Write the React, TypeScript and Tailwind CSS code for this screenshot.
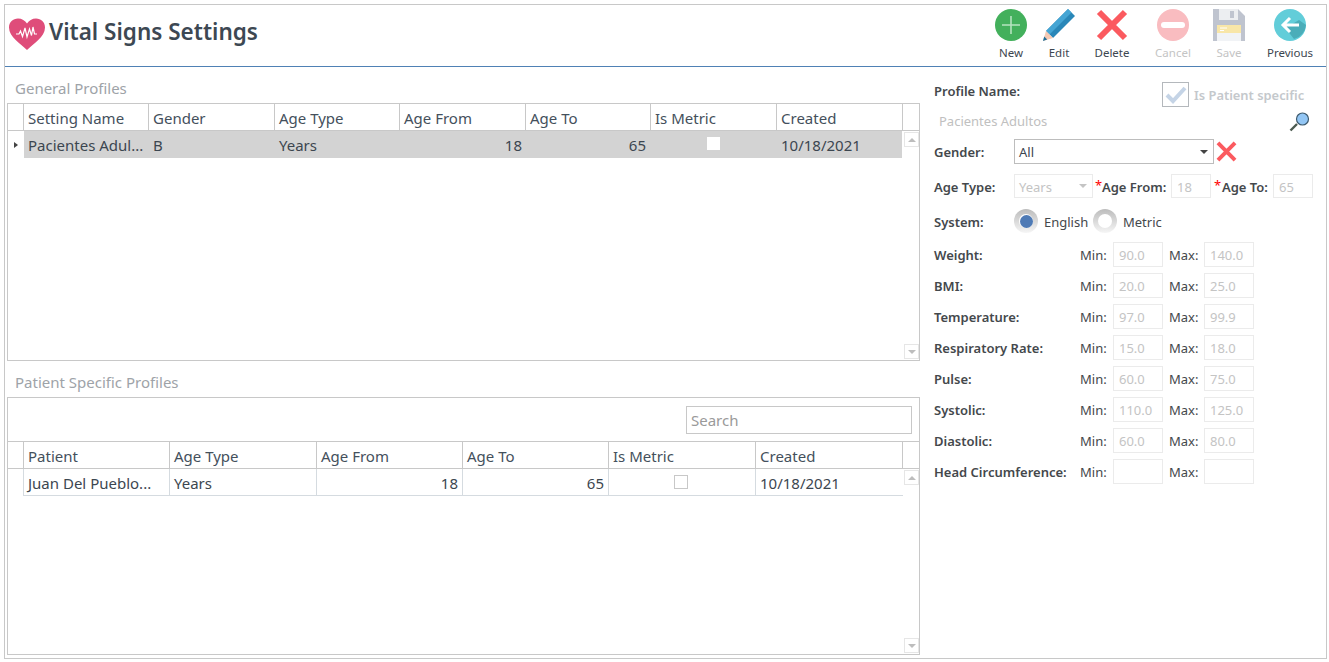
const FONT = "font-['Noto_Sans',sans-serif]";

function HeartIcon() {
  return (
    <svg width="36" height="32" viewBox="0 0 36 32">
      <path d="M18 32 C12 26 0 19 0 9.5 C0 4 4 0.5 9 0.5 C13 0.5 16 2.5 18 5.5 C20 2.5 23 0.5 27 0.5 C32 0.5 36 4 36 9.5 C36 19 24 26 18 32 Z" fill="#df4d7a" />
      <path d="M7 16 L10 16 L11.5 13 L13.5 18.5 L16 10 L18 19 L20.5 11 L22.5 17.5 L24 9 L25.5 16 L28 16" fill="none" stroke="#fff" strokeWidth="1.2" />
    </svg>
  );
}

function NewIcon() {
  return (
    <svg width="32" height="32" viewBox="0 0 32 32">
      <circle cx="16" cy="16" r="16" fill="#43b05c" />
      <path d="M16 7 V25 M7 16 H25" stroke="#b5e3bf" strokeWidth="1.6" />
    </svg>
  );
}

function EditIcon() {
  return (
    <svg width="32" height="32" viewBox="0 0 32 32">
      <path d="M25 0 L32 7 L10 29 L3 22 Z" fill="#2a87b8" />
      <path d="M25 0 L28.5 3.5 L6.5 25.5 L3 22 Z" fill="#45a5d4" />
      <path d="M3 22 L10 29 L0 32 Z" fill="#f5c9b3" />
      <path d="M1.2 27.5 L4.2 30.6 L0 32 Z" fill="#1f6f99" />
    </svg>
  );
}

function DeleteIcon({ size = 32 }: { size?: number }) {
  return (
    <svg width={size} height={size} viewBox="0 0 32 32">
      <path d="M3 3 L29 29 M29 3 L3 29" stroke="#fb5a5f" strokeWidth="6" />
    </svg>
  );
}

function CancelIcon() {
  return (
    <svg width="32" height="32" viewBox="0 0 32 32">
      <circle cx="16" cy="16" r="16" fill="#f9bcc0" />
      <rect x="4" y="13" width="24" height="6" rx="3" fill="#fff" />
    </svg>
  );
}

function SaveIcon() {
  return (
    <svg width="32" height="32" viewBox="0 0 32 32">
      <path d="M0 0 H25 L32 7 V32 H0 Z" fill="#bfc4cf" />
      <rect x="6" y="0" width="19" height="11" fill="#eceef1" />
      <rect x="17" y="2" width="4" height="7" fill="#bfc4cf" />
      <rect x="4" y="16" width="24" height="16" fill="#f1f3f6" />
      <rect x="4" y="16" width="24" height="8" fill="#f8e6a8" />
      <path d="M7 19 H14 M7 21.5 H11" stroke="#fff" strokeWidth="1" />
    </svg>
  );
}

function PreviousIcon() {
  return (
    <svg width="32" height="32" viewBox="0 0 32 32">
      <circle cx="16" cy="16" r="16" fill="#62cdd9" />
      <path d="M9 16 L20 30 A16 16 0 0 0 32 16 L25 11 L15 17 Z" fill="#4badb9" />
      <path d="M16 9 L9 16 L16 23 M9 16 H25" fill="none" stroke="#fff" strokeWidth="3" />
    </svg>
  );
}

function SearchIcon() {
  return (
    <svg width="21" height="20" viewBox="0 0 21 20">
      <path d="M1.5 18.5 L8 12" stroke="#4c5a50" strokeWidth="2.4" />
      <circle cx="13.5" cy="7" r="6" fill="#93c6f4" stroke="#3d5a6e" strokeWidth="1.2" />
    </svg>
  );
}

const TOOLBAR = [
  { label: 'New', width: 'w-[52px]', icon: <NewIcon />, disabled: false },
  { label: 'Edit', width: 'w-[44px]', icon: <EditIcon />, disabled: false },
  { label: 'Delete', width: 'w-[62px]', icon: <DeleteIcon />, disabled: false },
  { label: 'Cancel', width: 'w-[60px]', icon: <CancelIcon />, disabled: true },
  { label: 'Save', width: 'w-[52px]', icon: <SaveIcon />, disabled: true },
  { label: 'Previous', width: 'w-[70px]', icon: <PreviousIcon />, disabled: false },
];

function ScrollButton({ up }: { up: boolean }) {
  return (
    <div className="flex h-[15px] w-[15px] items-center justify-center border border-[#e6e6e6] bg-white">
      <div
        className={`h-0 w-0 border-x-[4px] border-x-transparent ${
          up ? 'border-b-[4px] border-b-[#bdbdbd]' : 'border-t-[4px] border-t-[#bdbdbd]'
        }`}
      />
    </div>
  );
}

const GENERAL_COLS = 'grid-cols-[16px_125px_126px_125px_126px_125px_126px_126px_16px]';
const PATIENT_COLS = 'grid-cols-[16px_146px_147px_146px_146px_147px_147px_16px]';

function HeaderCell({ children }: { children?: string }) {
  return (
    <div className="flex items-center overflow-hidden border-r border-[#c8c8c8] pl-[4px] pt-[2px] text-[#44505c] last:border-r-0">
      {children}
    </div>
  );
}

function GeneralGrid() {
  const headers = ['Setting Name', 'Gender', 'Age Type', 'Age From', 'Age To', 'Is Metric', 'Created'];
  const cell = 'flex items-center bg-[#d3d3d3] pt-[2px]';
  return (
    <div className="flex h-[258px] flex-col border border-[#c8c8c8] text-[15px]">
      <div className={`grid h-[27px] shrink-0 border-b border-[#c8c8c8] ${GENERAL_COLS}`}>
        <HeaderCell />
        {headers.map((h) => (
          <HeaderCell key={h}>{h}</HeaderCell>
        ))}
        <HeaderCell />
      </div>
      <div className="flex min-h-0 flex-1">
        <div>
          <div className="grid h-[27px] grid-cols-[16px_125px_126px_125px_126px_125px_126px_125px] text-[#3c4650]">
            <div className="flex items-center justify-end pr-[6px]">
              <div className="h-0 w-0 border-y-[3.5px] border-l-[4px] border-y-transparent border-l-[#444]" />
            </div>
            <div className={`${cell} pl-[4px]`}>Pacientes Adul...</div>
            <div className={`${cell} pl-[4px]`}>B</div>
            <div className={`${cell} pl-[4px]`}>Years</div>
            <div className={`${cell} justify-end pr-[4px]`}>18</div>
            <div className={`${cell} justify-end pr-[5px]`}>65</div>
            <div className={`${cell} justify-center pr-[2px]`}>
              <div className="mb-[4px] h-[13px] w-[13px] bg-white" />
            </div>
            <div className={`${cell} pl-[4px]`}>10/18/2021</div>
          </div>
        </div>
        <div className="flex flex-1 flex-col items-end justify-between py-px">
          <ScrollButton up />
          <ScrollButton up={false} />
        </div>
      </div>
    </div>
  );
}

function PatientGrid() {
  const headers = ['Patient', 'Age Type', 'Age From', 'Age To', 'Is Metric', 'Created'];
  const cell = 'flex items-center border-r border-b border-[#d5dbe0] pl-[4px] pt-[2px]';
  return (
    <div className="flex h-[258px] flex-col border border-[#c8c8c8] text-[15px]">
      <div className="flex h-[44px] shrink-0 justify-end border-b border-[#c8c8c8] pr-[7px] pt-[8px]">
        <div className="flex h-[28px] w-[226px] items-center border border-[#c8c8c8] pl-[4px] pt-px text-[#9a9a9a]">Search</div>
      </div>
      <div className={`grid h-[27px] shrink-0 border-b border-[#c8c8c8] ${PATIENT_COLS}`}>
        <HeaderCell />
        {headers.map((h) => (
          <HeaderCell key={h}>{h}</HeaderCell>
        ))}
        <HeaderCell />
      </div>
      <div className="flex min-h-0 flex-1">
        <div className="h-[27px]">
          <div className="grid h-[27px] grid-cols-[16px_146px_147px_146px_146px_147px_147px] text-[#3c4650]">
            <div className="border-r border-[#d5dbe0]" />
            <div className={cell}>Juan Del Pueblo...</div>
            <div className={cell}>Years</div>
            <div className={`${cell} justify-end pr-[4px]`}>18</div>
            <div className={`${cell} justify-end pr-[4px]`}>65</div>
            <div className={`${cell} justify-center pr-[6px]`}>
              <div className="mb-[2px] h-[14px] w-[14px] border border-[#c8c8c8] bg-white" />
            </div>
            <div className="flex items-center border-b border-[#d5dbe0] pl-[4px] pt-[2px]">10/18/2021</div>
          </div>
        </div>
        <div className="flex flex-1 flex-col items-end justify-between py-px">
          <ScrollButton up />
          <ScrollButton up={false} />
        </div>
      </div>
    </div>
  );
}

function SectionLabel({ children }: { children: string }) {
  return <div className="flex h-[36px] items-end pb-[5px] pl-[8px] text-[15px] leading-[20px] text-[#9ea3a8]">{children}</div>;
}

function DisabledBox({ value, width }: { value?: string; width: string }) {
  return (
    <div className={`flex h-[25px] shrink-0 items-center border border-[#ebebeb] pl-[5px] pt-[3px] text-[#c4c4c4] ${width}`}>{value}</div>
  );
}

function Radio({ checked }: { checked: boolean }) {
  return (
    <div className="flex h-[24px] w-[24px] items-center justify-center rounded-full bg-gradient-to-b from-[#bcbcbc] to-[#f6f6f6]">
      <div className="flex h-[14px] w-[14px] items-center justify-center rounded-full bg-white">
        {checked && <div className="h-[13px] w-[13px] rounded-full bg-[#4e7ab5]" />}
      </div>
    </div>
  );
}

const RANGES = [
  { label: 'Weight:', min: '90.0', max: '140.0' },
  { label: 'BMI:', min: '20.0', max: '25.0' },
  { label: 'Temperature:', min: '97.0', max: '99.9' },
  { label: 'Respiratory Rate:', min: '15.0', max: '18.0' },
  { label: 'Pulse:', min: '60.0', max: '75.0' },
  { label: 'Systolic:', min: '110.0', max: '125.0' },
  { label: 'Diastolic:', min: '60.0', max: '80.0' },
  { label: 'Head Circumference:', min: '', max: '' },
];

function DetailsPanel() {
  const label = 'pt-[3px] font-semibold text-[#44484c]';
  return (
    <div className="flex w-[391px] shrink-0 flex-col pt-[15px] text-[13px]">
      <div className="flex h-[25px] items-start">
        <div className="w-[228px] font-semibold text-[#44484c]">Profile Name:</div>
        <div className="flex h-[25px] w-[27px] items-center justify-center border border-[#b4b8bc]">
          <svg width="22" height="18" viewBox="0 0 22 18">
            <path d="M2 9 L8 15 L20 2" fill="none" stroke="#c5d4e6" strokeWidth="4" />
          </svg>
        </div>
        <div className="ml-[5px] mt-[4px] text-[12.9px] font-semibold text-[#c4c8cc]">Is Patient specific</div>
      </div>
      <div className="flex h-[24px] items-center justify-between pl-[5px] pr-[15px] pt-[5px] text-[#c0c0c0]">
        <span>Pacientes Adultos</span>
        <SearchIcon />
      </div>
      <div className="mt-[8px] flex h-[25px] items-center">
        <div className={`${label} w-[80px]`}>Gender:</div>
        <div className="flex h-[25px] w-[200px] items-center justify-between border border-[#bdbdbd] pl-[4px] pr-[5px] text-[#3c4650]">
          <span className="pt-[3px]">All</span>
          <div className="h-0 w-0 border-x-[4px] border-t-[4px] border-x-transparent border-t-[#444]" />
        </div>
        <div className="ml-[2px]">
          <DeleteIcon size={21} />
        </div>
      </div>
      <div className="mt-[10px] flex h-[24px] items-center">
        <div className={`${label} w-[80px]`}>Age Type:</div>
        <div className="flex h-[24px] w-[79px] items-center justify-between border border-[#ebebeb] pl-[4px] pr-[5px] text-[#c4c4c4]">
          <span className="pt-[3px]">Years</span>
          <div className="h-0 w-0 border-x-[4px] border-t-[4px] border-x-transparent border-t-[#c4c4c4]" />
        </div>
        <span className="ml-[2px] w-[7px] text-[#f00]">*</span>
        <div className={`${label} w-[69px]`}>Age From:</div>
        <DisabledBox value="18" width="w-[40px] !h-[24px]" />
        <span className="ml-[3px] w-[8px] text-[#f00]">*</span>
        <div className={`${label} w-[51px]`}>Age To:</div>
        <DisabledBox value="65" width="w-[40px] !h-[24px]" />
      </div>
      <div className="mt-[11px] flex h-[24px] items-center">
        <div className="w-[80px] pt-[3px] font-semibold text-[#44484c]">System:</div>
        <Radio checked />
        <span className="ml-[6px] w-[49px] pt-[3px] text-[#44484c]">English</span>
        <Radio checked={false} />
        <span className="ml-[6px] pt-[3px] text-[#44484c]">Metric</span>
      </div>
      <div className="mt-[9px] flex flex-col gap-[6px]">
        {RANGES.map((r) => (
          <div key={r.label} className="flex h-[25px] items-center">
            <div className={`${label} w-[146px]`}>{r.label}</div>
            <div className="w-[33px] pt-[3px] text-[#44484c]">Min:</div>
            <DisabledBox value={r.min} width="w-[50px]" />
            <div className="ml-[6px] w-[35px] pt-[3px] text-[#44484c]">Max:</div>
            <DisabledBox value={r.max} width="w-[50px]" />
          </div>
        ))}
      </div>
    </div>
  );
}

export default function App() {
  return (
    <div className={`h-[662px] w-[1329px] bg-white pl-[4px] pt-[4px] ${FONT}`}>
      <div className="flex h-[655px] w-[1323px] flex-col border border-[#c8c8c8]">
        <div className="flex h-[62px] shrink-0 items-start justify-between border-b border-[#4f81b5]">
          <div className="flex items-center gap-[4px] pl-[4px] pt-[13px]">
            <HeartIcon />
            <h1 className="mb-[4px] text-[22.5px] font-semibold leading-[28px] text-[#3d4853]">Vital Signs Settings</h1>
          </div>
          <div className="flex pr-px pt-[4px]">
            {TOOLBAR.map((b) => (
              <div key={b.label} className={`flex flex-col items-center ${b.width}`}>
                {b.icon}
                <span className={`mt-[4px] text-[11.5px] leading-[16px] ${b.disabled ? 'text-[#c4c4c4]' : 'text-[#3c4650]'}`}>{b.label}</span>
              </div>
            ))}
          </div>
        </div>
        <div className="flex gap-[14px] pl-[2px]">
          <div className="w-[913px] shrink-0">
            <SectionLabel>General Profiles</SectionLabel>
            <GeneralGrid />
            <SectionLabel>Patient Specific Profiles</SectionLabel>
            <PatientGrid />
          </div>
          <DetailsPanel />
        </div>
      </div>
    </div>
  );
}
